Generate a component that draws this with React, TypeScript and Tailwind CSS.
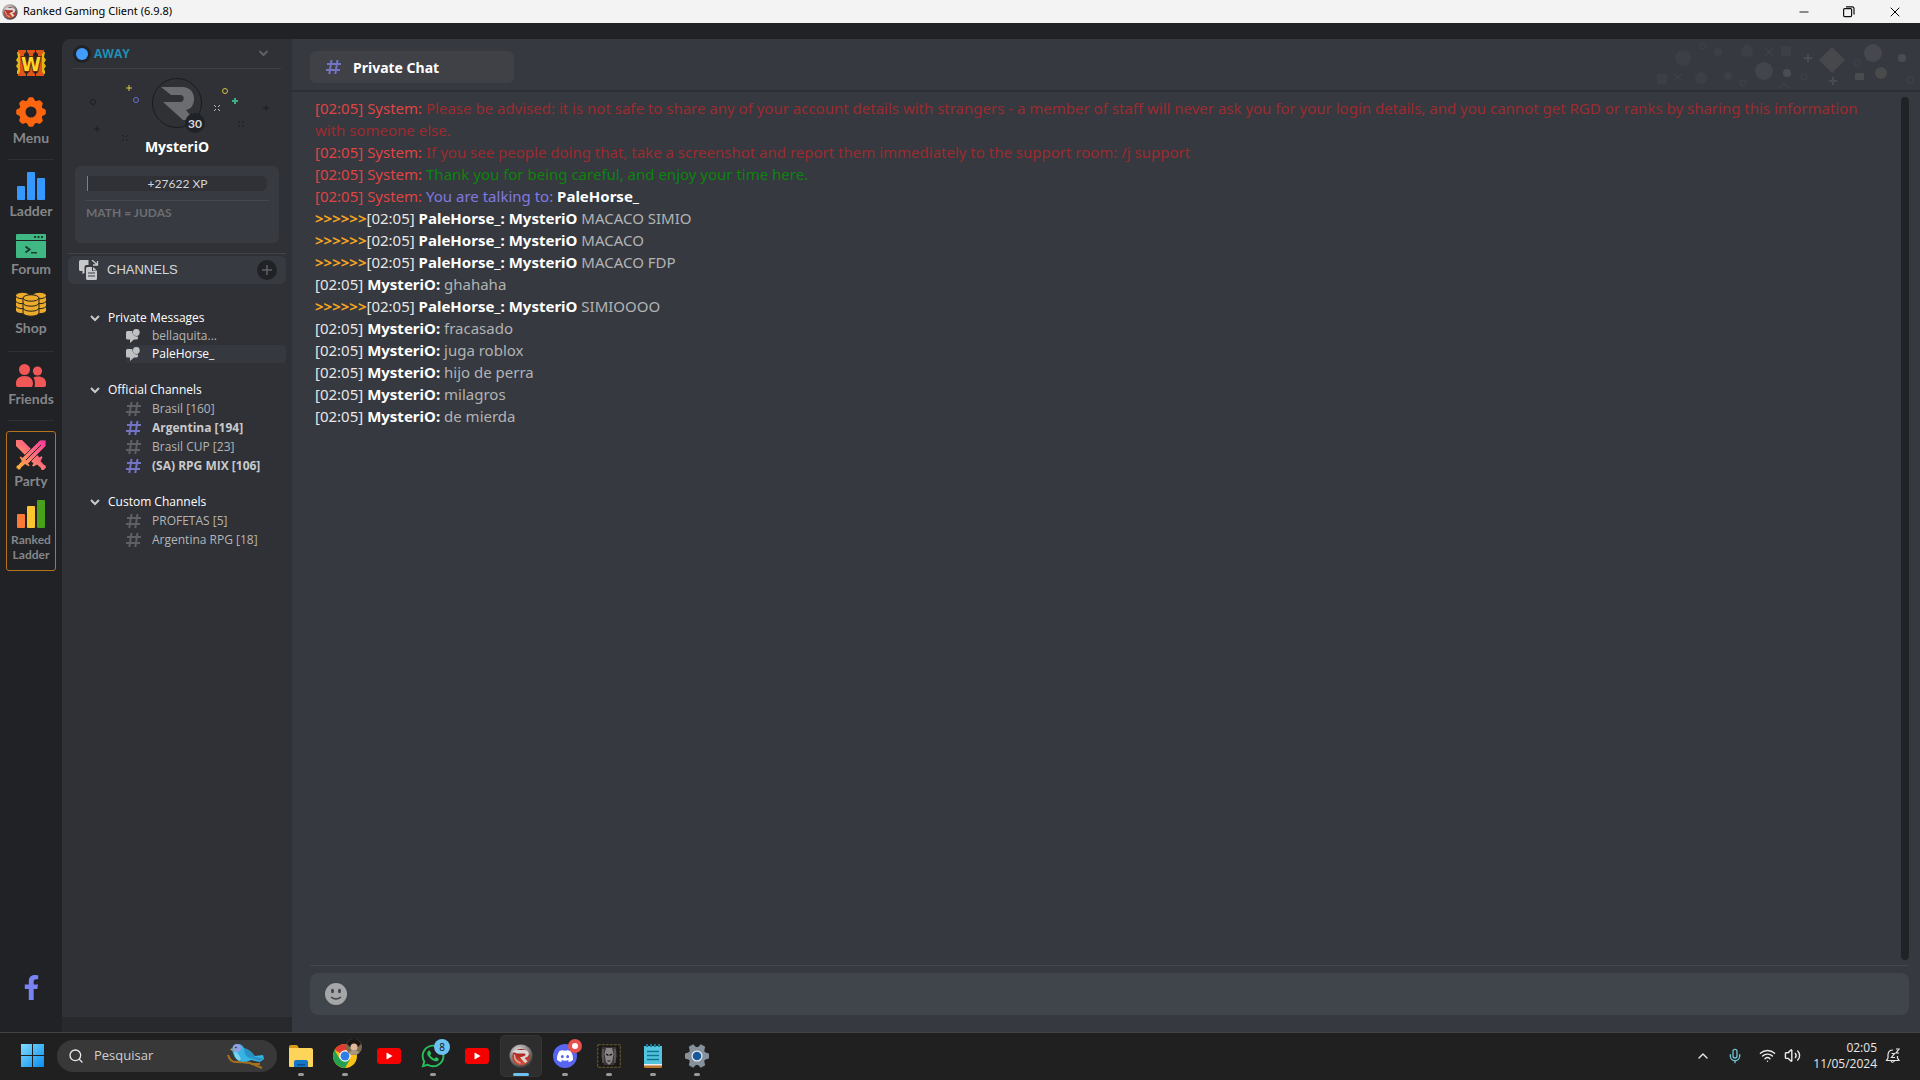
import type { ReactNode } from "react";
import { FaFacebookF, FaWhatsapp } from "react-icons/fa";
import { SiDiscord } from "react-icons/si";
import { ChevronUp, Mic, Minus, Search, Volume2, Wifi, X } from "lucide-react";

interface Message {
  time: string;
  author: string;
  text: string;
  kind: "warning" | "success" | "talking" | "chat" | "mention";
}

const MESSAGES: Message[] = [
  {
    time: "02:05",
    author: "System",
    kind: "warning",
    text: "Please be advised: it is not safe to share any of your account details with strangers - a member of staff will never ask you for your login details, and you cannot get RGD or ranks by sharing this information with someone else.",
  },
  {
    time: "02:05",
    author: "System",
    kind: "warning",
    text: "If you see people doing that, take a screenshot and report them immediately to the support room: /j support",
  },
  { time: "02:05", author: "System", kind: "success", text: "Thank you for being careful, and enjoy your time here." },
  { time: "02:05", author: "System", kind: "talking", text: "PaleHorse_" },
  { time: "02:05", author: "PaleHorse_", kind: "mention", text: "MACACO SIMIO" },
  { time: "02:05", author: "PaleHorse_", kind: "mention", text: "MACACO" },
  { time: "02:05", author: "PaleHorse_", kind: "mention", text: "MACACO FDP" },
  { time: "02:05", author: "MysteriO", kind: "chat", text: "ghahaha" },
  { time: "02:05", author: "PaleHorse_", kind: "mention", text: "SIMIOOOO" },
  { time: "02:05", author: "MysteriO", kind: "chat", text: "fracasado" },
  { time: "02:05", author: "MysteriO", kind: "chat", text: "juga roblox" },
  { time: "02:05", author: "MysteriO", kind: "chat", text: "hijo de perra" },
  { time: "02:05", author: "MysteriO", kind: "chat", text: "milagros" },
  { time: "02:05", author: "MysteriO", kind: "chat", text: "de mierda" },
];

const OFFICIAL = [
  { name: "Brasil [160]", unread: false },
  { name: "Argentina [194]", unread: true },
  { name: "Brasil CUP [23]", unread: false },
  { name: "(SA) RPG MIX [106]", unread: true },
];

const CUSTOM = [
  { name: "PROFETAS [5]", unread: false },
  { name: "Argentina RPG [18]", unread: false },
];

/* ---------- Icons ---------- */

function RgcBall({ className }: { className: string }) {
  return (
    <svg viewBox="0 0 24 24" className={className} aria-hidden="true">
      <defs>
        <radialGradient id="ball" cx="40%" cy="30%" r="75%">
          <stop offset="0" stopColor="#e9e4e4" />
          <stop offset="0.55" stopColor="#8d8585" />
          <stop offset="1" stopColor="#3d3535" />
        </radialGradient>
        <linearGradient id="ballRed" x1="0" y1="0" x2="0" y2="1">
          <stop offset="0" stopColor="#8e1414" />
          <stop offset="1" stopColor="#e2543a" />
        </linearGradient>
      </defs>
      <circle cx="12" cy="12" r="11.500" fill="url(#ball)" />
      <ellipse cx="12" cy="13" rx="8.800" ry="8" fill="url(#ballRed)" />
      <path d="M3 7.500 6 6h9.500c5 0 6 6 1.500 7.500l-1.500.5 3 3.500-2.500 1.500-5-5.500 4.500-1.500c1.500-.7 1.300-2.500-.5-2.500H8z" fill="#dcd6d6" />
      <path d="M5.500 10.500q-.5 6.500 6 8.500" stroke="#d8a9a0" strokeWidth="1.500" fill="none" />
    </svg>
  );
}

function WarcraftIcon() {
  return (
    <svg viewBox="0 0 30 28" className="h-7 w-[30px]" aria-hidden="true">
      <path d="M1 3h3v22H1v-3l1-2-2-3 2-3-2-3 2-3zM29 3h-3v22h3v-3l-1-2 2-3-2-3 2-3-2-3z" fill="#e2b714" />
      <path d="M2 1h8v2L8 5v18l2 2v2H2v-2l2-2V5L2 3zM20 1h8v2l-2 2v18l2 2v2h-8v-2l2-2V5l-2-2zM11 1h8v2l-2 2v18l2 2v2h-8v-2l2-2V5l-2-2z" fill="#e2551a" />
      <text
        x="15"
        y="22"
        textAnchor="middle"
        fontSize="20"
        fontWeight="700"
        fontFamily="DejaVu Sans Condensed, sans-serif"
        fill="#ffd62b"
        stroke="#5e2a08"
        strokeWidth="2"
        paintOrder="stroke"
      >
        W
      </text>
    </svg>
  );
}

const GEAR_TEETH = [0, 45, 90, 135, 180, 225, 270, 315];

function GearIcon() {
  return (
    <svg viewBox="0 0 30 30" className="h-[30px] w-[30px]" aria-hidden="true">
      <g fill="#fb6510">
        {GEAR_TEETH.map((a) => (
          <path key={a} d="M10 6 12.300 1.200Q12.700.2 13.800.2h2.400q1.100 0 1.500 1L20 6z" transform={`rotate(${a} 15 15)`} />
        ))}
        <circle cx="15" cy="15" r="12" />
      </g>
      <circle cx="15" cy="15" r="5.500" fill="#202225" />
    </svg>
  );
}

function LadderIcon() {
  return (
    <svg viewBox="0 0 28 28" className="h-7 w-7" fill="#3498ff" aria-hidden="true">
      <rect y="14" width="8" height="14" rx="1" />
      <rect x="10" width="8" height="28" rx="1" />
      <rect x="20" y="6" width="8" height="22" rx="1" />
    </svg>
  );
}

function ForumIcon() {
  return (
    <svg viewBox="0 0 30 24" className="h-6 w-[30px]" aria-hidden="true">
      <path d="M1 0h28a1 1 0 0 1 1 1v5H0V1a1 1 0 0 1 1-1zM0 7h30v16a1 1 0 0 1-1 1H1a1 1 0 0 1-1-1z" fill="#3fb883" />
      <path d="M18 2h2v2h-2zM21.500 2h2v2h-2zM25 2h2v2h-2zM15 18h6v1.500h-6z" fill="#1d3d31" />
      <path d="m9.500 12.500 4 3-4 3" stroke="#1d3d31" strokeWidth="2" fill="none" />
    </svg>
  );
}

function CoinStack({ x, y, rows, rx }: { x: number; y: number; rows: number; rx: number }) {
  const h = rows * 5;
  return (
    <g stroke="#202225" strokeWidth="1">
      <path d={`M${x - rx} ${y}v${h}a${rx} 3.200 0 0 0 ${rx * 2} 0v-${h}z`} fill="#ecab2a" />
      {Array.from({ length: rows - 1 }, (_, i) => (
        <path key={i} d={`M${x - rx} ${y + 5 * (i + 1)}a${rx} 3.200 0 0 0 ${rx * 2} 0`} fill="none" />
      ))}
      <ellipse cx={x} cy={y} rx={rx} ry="3.200" fill="#ecab2a" />
    </g>
  );
}

function ShopIcon() {
  return (
    <svg viewBox="0 0 30 25" className="h-[25px] w-[30px]" aria-hidden="true">
      <CoinStack x={6.5} y={3.5} rows={3} rx={7} />
      <CoinStack x={23.5} y={3.5} rows={3} rx={7} />
      <CoinStack x={15} y={6} rows={3} rx={8} />
    </svg>
  );
}

function FriendsIcon() {
  return (
    <svg viewBox="0 0 30 24" className="h-6 w-[30px]" fill="#f25757" aria-hidden="true">
      <circle cx="8.500" cy="5.500" r="5.500" />
      <path d="M0 21v-2c0-4 3-7 8.500-7s8.500 3 8.500 8l-1 3H2q-2 0-2-2z" />
      <circle cx="21.500" cy="7" r="4.600" />
      <path d="M18.500 23H28q2 0 2-2v-2c0-4-3-6.500-8-6.500-1.700 0-3.300.3-4.600 1.100 1.500 2.200 2.100 6 1.100 9.400z" />
    </svg>
  );
}

function SwordsIcon() {
  return (
    <svg viewBox="0 0 30 30" className="h-[30px] w-[30px]" aria-hidden="true">
      <defs>
        <linearGradient id="blade" gradientUnits="userSpaceOnUse" x1="2" y1="28" x2="28" y2="2">
          <stop offset="0" stopColor="#ffb03a" />
          <stop offset="0.5" stopColor="#fd7277" />
          <stop offset="1" stopColor="#ff3d9a" />
        </linearGradient>
      </defs>
      <g fill="url(#blade)">
        <path d="M0 0h6l17.500 17.500 2-1.500 1 1.500-2 3.500 3.500 4q2-.5 2 2.500l-2.500 2.500q-3 0-2.500-2l-4-3.500-3.500 2-1.500-1 1.500-2L0 6z" />
        <path d="M30 0h-6L6.500 17.500l-2-1.500-1 1.500 2 3.500L2 25q-2-.5-2 2.500L2.500 30q3 0 2.500-2l4-3.500 3.500 2 1.500-1-1.500-2L30 6z" stroke="#202225" strokeWidth=".8" />
      </g>
      <path d="M25 5 10 20" stroke="#202225" strokeWidth="1" />
    </svg>
  );
}

function RankedIcon() {
  return (
    <svg viewBox="0 0 28 28" className="h-7 w-7" aria-hidden="true">
      <rect y="14" width="8" height="14" rx="1" fill="#fc7a35" />
      <rect x="10" y="6" width="8" height="22" rx="1" fill="#fcc52f" />
      <rect x="20" width="8" height="28" rx="1" fill="#49a01b" />
    </svg>
  );
}

function HashIcon({ color }: { color: string }) {
  return (
    <svg viewBox="0 0 15 14" className="h-[14px] w-[15px] shrink-0" fill={color} aria-hidden="true">
      <path
        fillRule="evenodd"
        d="M4.500 0h2L6 3h4l.5-3h2L12 3h3v2h-3.300l-.6 4H14v2h-3.200l-.5 3h-2l.5-3h-4l-.5 3h-2l.5-3H0V9h3.100l.6-4H1V3h3zM5.700 5 5.100 9h4l.6-4z"
      />
    </svg>
  );
}

function DmIcon() {
  return (
    <svg viewBox="0 0 14 14" className="h-[14px] w-[14px] shrink-0" fill="#bfc0c2" aria-hidden="true">
      <path d="M1.500 2h4.800c0 3.500 2 5.500 5.700 5.500V9q0 1.500-1.500 1.500H8L4 14v-3.500H1.500Q0 10.500 0 9V3.500Q0 2 1.500 2z" />
      <circle cx="10.300" cy="3.500" r="3.400" />
    </svg>
  );
}

function Caret({ className }: { className: string }) {
  return (
    <svg viewBox="0 0 10 7" className={className} fill="none" stroke="currentColor" strokeWidth="2" aria-hidden="true">
      <path d="m1 1 4 4 4-4" />
    </svg>
  );
}

function ChannelsIcon() {
  return (
    <svg viewBox="0 0 20 20" className="h-5 w-5" aria-hidden="true">
      <path d="M1.500 0h8v5h-2q-2 0-2 2v6l-2 1v-3h-2Q0 11 0 9.500v-8Q0 0 1.500 0z" fill="#c7c8ca" />
      <path d="M8.500 7H13v4h5v7.500q0 1.500-1.500 1.500h-8Q7 20 7 18.500v-10Q7 7 8.500 7zM14 7l4 3.500h-4z" fill="#c7c8ca" />
      <path d="M9 13h7M9 16h7" stroke="#383b42" strokeWidth="1.200" />
      <path d="m13 0 5 4.500M18.500 1v4H14" stroke="#c7c8ca" strokeWidth="1.300" fill="none" />
    </svg>
  );
}

function ProfileBanner() {
  return (
    <svg viewBox="0 0 184 70" className="h-[70px] w-[184px]" fill="none" aria-label="Level 30">
      <g strokeWidth="1">
        <circle cx="8" cy="30" r="2.500" stroke="#1c1d20" />
        <path d="M44 13v6M41 16h6" stroke="#d6cb4a" />
        <circle cx="51" cy="28" r="2.500" stroke="#6a72cf" />
        <path d="M12 54v6M9 57h6" stroke="#1c1d20" />
        <path d="m37 63 2 2m2 2 2 2m0-6-2 2m-2 2-2 2" stroke="#1c1d20" />
        <circle cx="140" cy="19" r="2.500" stroke="#cfc344" />
        <path d="M150 26v6M147 29h6" stroke="#3fae80" strokeWidth="2" />
        <path d="m129 33 2 2m2 2 2 2m0-6-2 2m-2 2-2 2" stroke="#b7b8c6" />
        <path d="M181 33v6M178 36h6" stroke="#1c1d20" />
        <path d="m153 49 2 2m2 2 2 2m0-6-2 2m-2 2-2 2" stroke="#1c1d20" />
      </g>
      <circle cx="92" cy="31" r="24.500" fill="#2f3135" stroke="#1a1b1e" />
      <path d="M76 15h21c8 0 12 5 12 12 0 6-3 10-8 11l8 10H98L78 30h17c5 0 5-7 0-7h-9z" fill="#6c6d71" />
      <circle cx="110" cy="51" r="10" fill="#1f2226" />
      <text x="110" y="56" textAnchor="middle" fontSize="12" fontWeight="700" fontFamily="Lato, sans-serif" fill="#d7d8da">
        30
      </text>
    </svg>
  );
}

function HeaderPattern() {
  return (
    <svg viewBox="0 0 264 52" className="h-[52px] w-[264px]" fill="#42454b" aria-hidden="true">
      <g fill="#3c3f45">
        <circle cx="27" cy="19" r="8" />
        <circle cx="62" cy="13" r="4" />
        <circle cx="91" cy="12" r="6" />
        <circle cx="72" cy="37" r="4" />
        <circle cx="45" cy="39" r="6" />
        <rect x="1" y="35" width="10" height="10" />
        <rect x="125" y="7" width="10" height="10" rx="1" />
      </g>
      <circle cx="108" cy="32" r="9" />
      <circle cx="131" cy="34" r="4" fill="#4b4d53" />
      <path d="m176 8 13 13-13 13-13-13z" fill="#47484c" />
      <circle cx="217" cy="14" r="9" fill="#46474f" />
      <circle cx="246" cy="19" r="4" fill="#4b4d53" />
      <circle cx="225" cy="34" r="6" fill="#494a4b" />
      <rect x="199" y="34" width="9" height="7" fill="#4a4b4f" />
      <g fill="none" stroke="#404349" strokeWidth="1">
        <circle cx="47" cy="7" r="3" />
        <circle cx="87" cy="44" r="3" />
        <circle cx="148" cy="38" r="3" />
        <circle cx="201" cy="24" r="3" />
        <circle cx="254" cy="41" r="3" />
        <path d="m109 9 8 8m0-8-8 8M18 34l8 8m0-8-8 8M123 49l5-4 5 4" />
      </g>
      <path d="M152 15v8M148 19h8M177 38v8M173 42h8" stroke="#484b51" strokeWidth="2" />
    </svg>
  );
}

function WindowsLogo() {
  return (
    <svg viewBox="0 0 23 23" className="h-[23px] w-[23px]" aria-hidden="true">
      <defs>
        <linearGradient id="win" x1="0" y1="0" x2="1" y2="1">
          <stop offset="0" stopColor="#7fdcff" />
          <stop offset="1" stopColor="#0a8cf0" />
        </linearGradient>
      </defs>
      <path d="M0 0h11v11H0zM12 0h11v11H12zM0 12h11v11H0zM12 12h11v11H12z" fill="url(#win)" />
    </svg>
  );
}

function BirdArt() {
  return (
    <svg viewBox="0 0 38 26" className="h-[26px] w-[38px]" aria-hidden="true">
      <path d="M1 12q2 7 8 7t14 1l12 5M24 21l9 0" stroke="#a8701c" strokeWidth="2" fill="none" />
      <path d="M5 7q0-6 6-6 4 0 6 4l6 4 5 4 8-1 1 4-4 3-9-2q-3 2-8 2-8-1-10-9z" fill="#37b4e4" />
      <path d="M17 5q8 2 11 9l8 1-3 3-10-3q-6-2-6-10z" fill="#2792c6" />
      <path d="M7 8q5 2 7 8l-2 2q-5-3-5-10z" fill="#7fd3ea" />
      <circle cx="10" cy="5" r="4" fill="#8f9fe0" />
      <path d="M5 5 3 7l3 .500z" fill="#d9a441" />
      <circle cx="9" cy="4.500" r=".8" fill="#1b2430" />
    </svg>
  );
}

function FolderIcon() {
  return (
    <svg viewBox="0 0 24 22" className="h-[22px] w-6" aria-hidden="true">
      <path d="M0 2q0-2 2-2h6l2 3H0z" fill="#d99a13" />
      <path d="M0 3h22q2 0 2 2v16q0 1-1 1H1q-1 0-1-1z" fill="#ffd45a" />
      <path d="M5 22v-5q0-2 2-2h10q2 0 2 2v5z" fill="#1576c8" />
      <path d="M8 19h8v1.500H8z" fill="#0c4f93" />
    </svg>
  );
}

function ChromeIcon() {
  return (
    <svg viewBox="0 0 24 24" className="h-6 w-6" aria-hidden="true">
      <circle cx="12" cy="12" r="12" fill="#fbc116" />
      <path d="M12 12 1.600 6A12 12 0 0 1 22.400 6H12z" fill="#e33b2e" />
      <path d="M1.600 6 6.800 15 12 18l-3.400 5.500A12 12 0 0 1 1.600 6z" fill="#23a050" />
      <path d="M6.800 15 12 12l5.200 3-5.200 9q-2 0-4-.8z" fill="#23a050" />
      <circle cx="12" cy="12" r="5.700" fill="#fff" />
      <circle cx="12" cy="12" r="4.500" fill="#2f7de9" />
    </svg>
  );
}

function PhotoBadge() {
  return (
    <svg viewBox="0 0 16 16" className="h-4 w-4" aria-hidden="true">
      <circle cx="8" cy="8" r="8" fill="#7a6a4e" />
      <path d="M1 5Q3 0 8 0t7 5l-3 3H4z" fill="#1a1512" />
      <circle cx="8" cy="8" r="3.500" fill="#e0b79c" />
      <path d="M3 14q1-3 5-3t5 3q-5 4-10 0z" fill="#a89880" />
    </svg>
  );
}

function YoutubeIcon() {
  return (
    <svg viewBox="0 0 24 16" className="h-4 w-6" aria-hidden="true">
      <rect width="24" height="16" rx="3" fill="#f60000" />
      <path d="m9.500 4.500 6 3.500-6 3.500z" fill="#fff" />
    </svg>
  );
}

function WarcraftPortrait() {
  return (
    <svg viewBox="0 0 24 24" className="h-6 w-6" aria-hidden="true">
      <rect x=".75" y=".75" width="22.500" height="22.500" fill="#1b1817" stroke="#6d5f33" strokeWidth="1" strokeDasharray="3 1" />
      <path d="M5 3h14l1 9-3 9H7l-3-9z" fill="#3b3737" />
      <path d="M9 4h6l1.500 6-1.500 8-3 3-3-3-1.500-8z" fill="#8b8686" />
      <path d="M9 9.500l2.500 1v1.500L9 11zM15 9.500l-2.500 1v1.500L15 11zM10.500 16.500h3v1h-3z" fill="#161313" />
      <path d="M6 5v14M18 5v14" stroke="#777272" strokeWidth="1" />
    </svg>
  );
}

function NotepadIcon() {
  return (
    <svg viewBox="0 0 18 24" className="h-6 w-[18px]" aria-hidden="true">
      <path d="M0 2h18v20H0z" fill="#52c4df" />
      <path d="M0 21h18v2q0 1-1 1H1q-1 0-1-1z" fill="#c0752c" />
      <path d="M0 20h18v1.500H0z" fill="#eee" />
      <path d="M3 0v3M7 0v3M11 0v3M15 0v3" stroke="#1d7791" strokeWidth="2" />
      <path d="M3 7.500h12M3 11.500h12M3 15.500h12" stroke="#137391" strokeWidth="1.500" />
    </svg>
  );
}

function SettingsIcon() {
  return (
    <svg viewBox="0 0 24 24" className="h-6 w-6" aria-hidden="true">
      <g fill="#87919c">
        {[30, 90, 150, 210, 270, 330].map((a) => (
          <path key={a} d="M8 5 9.500 0h5L16 5z" transform={`rotate(${a} 12 12)`} />
        ))}
        <circle cx="12" cy="12" r="9" />
      </g>
      <circle cx="12" cy="12" r="5.500" fill="#e8edf2" />
      <circle cx="12" cy="12" r="4.300" fill="#15589c" />
    </svg>
  );
}

function BellSleepIcon() {
  return (
    <svg viewBox="0 0 16 16" className="h-4 w-4" fill="none" stroke="#e8e8e8" strokeWidth="1.200" aria-hidden="true">
      <path d="M8 2Q3.500 2 3 6.500V10l-1.500 2.500H14L12.500 10V8" />
      <path d="M6 13q1.500 2.500 3.500 0M6.500 5.500h3l-3 4H10M11 1h3l-3 4h3" />
    </svg>
  );
}

/* ---------- Left rail ---------- */

function RailButton({ icon, label, small }: { icon: ReactNode; label: string; small?: boolean }) {
  return (
    <button type="button" className="flex flex-col items-center gap-1 font-['Lato',sans-serif] font-bold text-[#858689]">
      {icon}
      <span className={small ? "text-[12px] leading-[15px]" : "text-[14px] leading-[14px]"}>{label}</span>
    </button>
  );
}

function Rail() {
  return (
    <nav className="flex w-[62px] shrink-0 flex-col items-center bg-[#202225]">
      <button type="button" aria-label="Warcraft III" className="mt-[10px]">
        <WarcraftIcon />
      </button>
      <div className="mt-5">
        <RailButton icon={<GearIcon />} label="Menu" />
      </div>
      <hr className="mt-[14px] w-[46px] border-[#2e3034]" />
      <div className="mt-3 flex flex-col gap-4">
        <RailButton icon={<LadderIcon />} label="Ladder" />
        <RailButton icon={<ForumIcon />} label="Forum" />
        <RailButton icon={<ShopIcon />} label="Shop" />
      </div>
      <hr className="mt-4 w-[46px] border-[#2e3034]" />
      <div className="mt-3">
        <RailButton icon={<FriendsIcon />} label="Friends" />
      </div>
      <hr className="mt-[14px] w-[46px] border-[#2e3034]" />
      <div className="mt-[10px] flex h-[140px] w-[50px] flex-col items-center gap-3 rounded-[3px] border border-[#b8721d] pt-2">
        <RailButton icon={<SwordsIcon />} label="Party" />
        <RailButton icon={<RankedIcon />} label="Ranked Ladder" small />
      </div>
      <a href="#facebook" aria-label="Facebook" className="mt-auto mb-8 text-[#7983f2]">
        <FaFacebookF size={25} />
      </a>
    </nav>
  );
}

/* ---------- Channel sidebar ---------- */

function Group({ title, children }: { title: string; children: ReactNode }) {
  return (
    <section>
      <button type="button" className="flex h-[18px] items-center gap-2 pl-[22px] text-white">
        <Caret className="h-[7px] w-[10px] text-[#c9cacc]" />
        {title}
      </button>
      <ul className="pl-[58px]">{children}</ul>
    </section>
  );
}

function Channel({ name, unread }: { name: string; unread: boolean }) {
  return (
    <li>
      <a
        href="#channel"
        className={`flex h-[19px] items-center gap-[11px] ${unread ? "font-bold text-[#c9cacc]" : "text-[#b4b5b8]"}`}
      >
        <HashIcon color={unread ? "#7474c4" : "#5e6066"} />
        {name}
      </a>
    </li>
  );
}

function DirectMessage({ name, active }: { name: string; active?: boolean }) {
  return (
    <li>
      <a
        href="#dm"
        className={`flex h-[18px] items-center gap-3 rounded-sm ${active ? "bg-[#36383f] text-white" : "text-[#b4b5b8]"}`}
      >
        <DmIcon />
        {name}
      </a>
    </li>
  );
}

function Sidebar() {
  return (
    <aside className="flex w-[230px] shrink-0 flex-col overflow-hidden rounded-tl-lg bg-[#2f3136] font-['Open_Sans',sans-serif] text-[12px]">
      <button
        type="button"
        className="mx-[11px] flex h-[30px] items-center border-b border-[#3d3f44] pr-3 pl-[3px] text-left font-bold text-[#1f8fb4]"
      >
        <span className="mr-[6px] h-3 w-3 rounded-full bg-[#409cff] ring-3 ring-[#202225]" />
        AWAY
        <Caret className="ml-auto h-[7px] w-[11px] text-[#5e6065]" />
      </button>
      <div className="mt-[3px] flex flex-col items-center">
        <ProfileBanner />
        <p className="-mt-1 text-[14px] leading-[18px] font-bold text-white">MysteriO</p>
      </div>
      <div className="mx-[13px] mt-[10px] h-[77px] rounded-md bg-[#373a41] px-[10px] pt-[10px]">
        <div className="mx-[2px] h-[15px] rounded-r-md border-l border-[#3fa56f] bg-[#2f3136] text-center font-['Lato',sans-serif] text-[12px] leading-[15px] text-[#d3d4d6]">
          +27622 XP
        </div>
        <p className="mt-[9px] border-t border-[#44474e] pt-[3px] pl-[1px] font-['Lato',sans-serif] text-[12px] font-bold text-[#6d6e72]">
          MATH = JUDAS
        </p>
      </div>
      <div className="mx-[6px] mt-[10px] border-t border-[#424449] pt-[2px]">
        <div className="flex h-7 items-center rounded-md bg-[#383a41] pr-[9px] pl-[11px]">
          <ChannelsIcon />
          <h2 className="ml-2 font-['Liberation_Sans',sans-serif] text-[13px] text-[#d6d7d9]">CHANNELS</h2>
          <button
            type="button"
            aria-label="Add channel"
            className="ml-auto flex h-5 w-5 items-center justify-center rounded-full bg-[#202225]"
          >
            <svg viewBox="0 0 10 10" className="h-[10px] w-[10px]" stroke="#606268" strokeWidth="1.500">
              <path d="M5 0v10M0 5h10" />
            </svg>
          </button>
        </div>
      </div>
      <div className="mx-[6px] mt-[25px] flex grow flex-col gap-[18px]">
        <Group title="Private Messages">
          <DirectMessage name="bellaquita..." />
          <DirectMessage name="PaleHorse_" active />
        </Group>
        <Group title="Official Channels">
          {OFFICIAL.map((c) => (
            <Channel key={c.name} {...c} />
          ))}
        </Group>
        <Group title="Custom Channels">
          {CUSTOM.map((c) => (
            <Channel key={c.name} {...c} />
          ))}
        </Group>
      </div>
      <div className="h-[15px] bg-[#27292d]" />
    </aside>
  );
}

/* ---------- Chat ---------- */

const TEXT_COLORS: Record<Message["kind"], string> = {
  warning: "text-[#9c2b30]",
  success: "text-[#0d840d]",
  talking: "font-bold text-white",
  chat: "text-[#b2b3b5]",
  mention: "text-[#b2b3b5]",
};

function MessageLine({ message }: { message: Message }) {
  const { time, author, text, kind } = message;
  const system = author === "System";

  return (
    <p>
      {kind === "mention" && <span className="font-bold text-[#f5a623]">&gt;&gt;&gt;&gt;&gt;&gt;</span>}
      <span className={system ? "text-[#df4545]" : "text-[#e6e6e7]"}>[{time}] </span>
      <span className={system ? "text-[#df4545]" : "font-bold text-white"}>{author}: </span>
      {kind === "mention" && <span className="font-bold text-white">MysteriO </span>}
      {kind === "talking" && <span className="text-[#8279e0]">You are talking to: </span>}
      <span className={TEXT_COLORS[kind]}>{text}</span>
    </p>
  );
}

function Chat() {
  return (
    <main className="flex min-w-0 grow flex-col bg-[#36393f] font-['Noto_Sans',sans-serif]">
      <header className="flex h-[53px] items-start justify-between border-b-2 border-[#2c2f35] pl-[18px]">
        <div className="mt-3 flex h-8 w-[204px] items-center gap-3 rounded-md bg-[#3f4147] pl-4">
          <HashIcon color="#7474c4" />
          <h1 className="text-[14px] font-bold text-white">Private Chat</h1>
        </div>
        <HeaderPattern />
      </header>
      <div className="mt-[5px] flex grow justify-between pr-[11px] pl-[23px]">
        <div className="pr-4 text-[15px] leading-[22px]">
          {MESSAGES.map((m, i) => (
            <MessageLine key={i} message={m} />
          ))}
        </div>
        <div className="w-2 shrink-0 rounded-full bg-[#202225]" />
      </div>
      <div className="mt-[5px] mr-[11px] mb-[17px] ml-[18px] border-t border-[#44474d] pt-[7px]">
        <div className="flex h-[42px] items-center gap-3 rounded-lg bg-[#40444b] px-[15px]">
          <button type="button" aria-label="Emoji">
            <svg viewBox="0 0 22 22" className="h-[22px] w-[22px]">
              <circle cx="11" cy="11" r="11" fill="#a5a6a8" />
              <ellipse cx="7.500" cy="8" rx="1.500" ry="2.200" fill="#40444b" />
              <ellipse cx="14.500" cy="8" rx="1.500" ry="2.200" fill="#40444b" />
              <path d="M6 14q5 4 10 0" stroke="#40444b" strokeWidth="1.500" fill="none" />
            </svg>
          </button>
          <input type="text" aria-label="Message" className="grow bg-transparent text-[15px] text-white outline-none" />
        </div>
      </div>
    </main>
  );
}

/* ---------- Taskbar ---------- */

interface TaskProps {
  label: string;
  icon: ReactNode;
  badge?: ReactNode;
  running?: boolean;
  active?: boolean;
}

function Task({ label, icon, badge, running, active }: TaskProps) {
  return (
    <button
      type="button"
      aria-label={label}
      className={`relative flex h-10 w-10 items-center justify-center rounded ${active ? "bg-[#2e2e2e] ring-1 ring-[#353535]" : ""}`}
    >
      {icon}
      {badge && <span className="absolute top-[3px] right-[3px]">{badge}</span>}
      {running && <span className="absolute bottom-0 h-[3px] w-[6px] rounded-full bg-[#9a9a9a]" />}
      {active && <span className="absolute bottom-0 h-[3px] w-4 rounded-full bg-[#6cc3f2]" />}
    </button>
  );
}

function Taskbar() {
  return (
    <footer className="flex h-12 shrink-0 items-center border-t border-[#434345] bg-[#202020] pb-[2px] font-['Open_Sans',sans-serif] text-[#e8e8e8]">
      <button type="button" aria-label="Start" className="ml-[21px]">
        <WindowsLogo />
      </button>
      <label className="ml-[13px] flex h-8 w-[220px] items-center rounded-full bg-[#383838] pr-3 pl-[11px]">
        <Search size={16} strokeWidth={2} />
        <input
          type="text"
          aria-label="Pesquisar"
          placeholder="Pesquisar"
          className="ml-[10px] w-0 grow bg-transparent text-[13px] outline-none placeholder:text-[#cfcfcf]"
        />
        <BirdArt />
      </label>
      <div className="ml-1 flex gap-1">
        <Task label="Explorador de Arquivos" icon={<FolderIcon />} running />
        <Task label="Chrome" icon={<ChromeIcon />} badge={<PhotoBadge />} running />
        <Task label="YouTube" icon={<YoutubeIcon />} />
        <Task
          label="WhatsApp"
          icon={<FaWhatsapp size={26} className="text-[#27c15b]" />}
          badge={
            <span className="flex h-4 w-4 items-center justify-center rounded-full bg-[#6cc3f2] text-[10px] leading-none text-[#111]">8</span>
          }
          running
        />
        <Task label="YouTube Music" icon={<YoutubeIcon />} />
        <Task label="Ranked Gaming Client" icon={<RgcBall className="h-6 w-6" />} active />
        <Task
          label="Discord"
          icon={
            <span className="flex h-6 w-6 items-center justify-center rounded-full bg-[#5765f0]">
              <SiDiscord size={16} className="text-white" />
            </span>
          }
          badge={
            <span className="flex h-[14px] w-[14px] items-center justify-center rounded-full bg-[#e8504f]">
              <span className="h-[6px] w-[6px] rounded-full bg-white" />
            </span>
          }
          running
        />
        <Task label="Warcraft III" icon={<WarcraftPortrait />} running />
        <Task label="Bloco de Notas" icon={<NotepadIcon />} running />
        <Task label="Configurações" icon={<SettingsIcon />} running />
      </div>
      <div className="mr-[19px] ml-auto flex items-center">
        <ChevronUp size={16} />
        <Mic size={16} className="ml-4 text-[#6fc3d0]" />
        <Wifi size={17} className="ml-4" />
        <Volume2 size={17} className="ml-2" />
        <time className="ml-3 text-right text-[12px] leading-4">
          02:05
          <br />
          11/05/2024
        </time>
        <span className="ml-2">
          <BellSleepIcon />
        </span>
      </div>
    </footer>
  );
}

function TitleBar() {
  return (
    <div className="flex h-[23px] shrink-0 items-center bg-[#f3f3f3] pl-[2px] font-['Noto_Sans',sans-serif] text-[11px] text-black">
      <RgcBall className="h-4 w-4" />
      <span className="ml-[5px]">Ranked Gaming Client (6.9.8)</span>
      <div className="mr-[17px] ml-auto flex items-center gap-8">
        <button type="button" aria-label="Minimize">
          <Minus size={14} strokeWidth={1.5} />
        </button>
        <button type="button" aria-label="Restore">
          <svg viewBox="0 0 12 12" className="h-3 w-3" fill="none" stroke="#111" strokeWidth="1.200">
            <rect x=".6" y="2.600" width="8" height="8" rx="1" />
            <path d="M3 .8h6.200Q11 .8 11 2.600V8.500" />
          </svg>
        </button>
        <button type="button" aria-label="Close">
          <X size={16} strokeWidth={1.5} />
        </button>
      </div>
    </div>
  );
}

export default function App() {
  return (
    <div className="flex h-screen flex-col overflow-hidden bg-[#202225]">
      <TitleBar />
      <div className="flex min-h-0 grow pt-4">
        <Rail />
        <Sidebar />
        <Chat />
      </div>
      <Taskbar />
    </div>
  );
}
